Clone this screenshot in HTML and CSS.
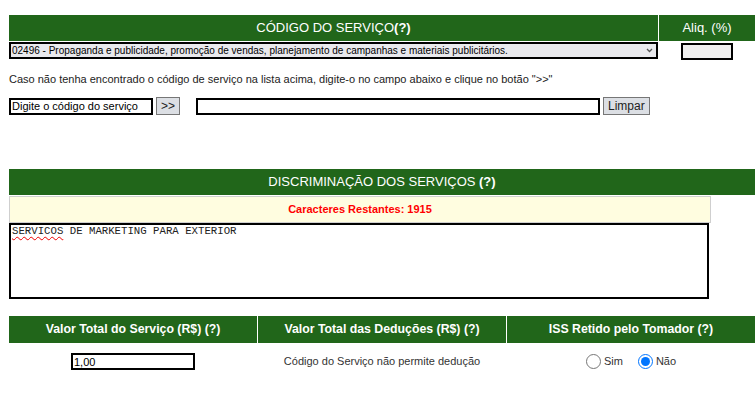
FILE: index.html
```html
<!DOCTYPE html>
<html lang="pt-BR">
<head>
  <meta charset="UTF-8" />
  <title>Serviço</title>
  <link rel="stylesheet" href="styles.css">
</head>
<body>
  <div class="page">
    <div class="codigo">
      <div class="th">CÓDIGO DO SERVIÇO<b>(?)</b></div>
      <div class="th">Aliq. (%)</div>
      <div class="cell selwrap">
        <select class="sel">
          <option>02496 - Propaganda e publicidade, promoção de vendas, planejamento de campanhas e materiais publicitários.</option>
        </select>
        <svg class="seta" width="7" height="5" viewBox="0 0 7 5"><path d="M1 1l2.5 2.5L6 1" fill="none" stroke="#555" stroke-width="1.3"/></svg>
      </div>
      <div class="cell center"><input class="aliq" type="text" disabled></div>
    </div>

    <p class="hint">Caso não tenha encontrado o código de serviço na lista acima, digite-o no campo abaixo e clique no botão "&gt;&gt;"</p>

    <div class="busca">
      <input class="cod" type="text" value="Digite o código do serviço">
      <button class="btn">&gt;&gt;</button>
      <input class="desc" type="text">
      <button class="btn">Limpar</button>
    </div>

    <div class="th wide">DISCRIMINAÇÃO DOS SERVIÇOS <b>(?)</b></div>
    <div class="restantes">Caracteres Restantes: 1915</div>
    <div class="discr"><span class="erro">SERVICOS</span> DE MARKETING PARA EXTERIOR</div>

    <div class="valores">
      <div class="th bold">Valor Total do Serviço (R$) (?)</div>
      <div class="th bold">Valor Total das Deduções (R$) (?)</div>
      <div class="th bold">ISS Retido pelo Tomador (?)</div>
      <div class="cell center"><input class="valor" type="text" value="1,00"></div>
      <div class="cell center small">Código do Serviço não permite dedução</div>
      <div class="cell center small">
        <label class="radio"><input type="radio" name="iss">Sim</label>
        <label class="radio"><input type="radio" name="iss" checked>Não</label>
      </div>
    </div>
  </div>
</body>
</html>
```

FILE: styles.css
```css
body {
  margin: 0;
  font-family: "Liberation Sans", Arial, sans-serif;
  color: #222;
  background: #fff;
}

.page {
  padding: 15px 0 0 9px;
  width: 746px;
}

.th {
  background-color: #21661a;
  color: #fff;
  font-size: 13px;
  text-align: center;
  height: 26px;
  line-height: 26px;
}

.th b {
  font-weight: bold;
}

.th.bold {
  font-weight: bold;
  font-size: 12.3px;
  height: 27px;
  line-height: 27px;
}

.codigo {
  display: grid;
  grid-template-columns: 649px 1fr;
  column-gap: 1px;
  row-gap: 1px;
}

.cell {
  font-size: 11px;
}

.center {
  text-align: center;
}

.selwrap {
  position: relative;
}

.sel {
  display: block;
  width: 649px;
  height: 17px;
  border: 2px solid #000;
  background: #e9e9ed;
  font-family: "Liberation Sans", Arial, sans-serif;
  font-size: 10px;
  padding: 0 0 0 1px;
  color: #000;
  appearance: none;
  -webkit-appearance: none;
  border-radius: 0;
}

.seta {
  position: absolute;
  left: 637px;
  top: 6px;
  pointer-events: none;
}

.aliq {
  width: 52px;
  height: 17px;
  box-sizing: border-box;
  border: 2px solid #000;
  background: #efefef;
  margin-top: 1px;
}

.hint {
  font-size: 11px;
  margin: 13px 0 0 0;
  line-height: 13px;
  color: #222;
}

.busca {
  display: flex;
  align-items: center;
  margin-top: 11px;
  height: 18px;
}

.busca input {
  box-sizing: border-box;
  height: 17px;
  border: 2px solid #000;
  font-family: "Liberation Sans", Arial, sans-serif;
  font-size: 11px;
  padding: 0 1px;
  color: #000;
}

.cod {
  width: 144px;
}

.desc {
  width: 404px;
  margin-left: 16px;
}

.btn {
  box-sizing: border-box;
  height: 18px;
  border: 1px solid #767676;
  background: #dcdfe4;
  font-family: "Liberation Sans", Arial, sans-serif;
  font-size: 12px;
  padding: 0 4px;
  margin-left: 3px;
  color: #222;
}

.wide {
  margin-top: 54px;
}

.restantes {
  width: 702px;
  box-sizing: border-box;
  height: 27px;
  line-height: 25px;
  margin-top: 1px;
  border: 1px solid #cfcfcf;
  background: #fffde0;
  color: #ff0000;
  font-weight: bold;
  font-size: 11px;
  text-align: center;
}

.discr {
  width: 700px;
  height: 76px;
  box-sizing: border-box;
  border: 2px solid #000;
  font-family: "Liberation Mono", "Courier New", monospace;
  font-size: 10.7px;
  padding: 0 1px;
  color: #222;
}

.erro {
  text-decoration: underline wavy #e00;
  text-decoration-thickness: 1px;
  text-underline-offset: 2px;
}

.valores {
  display: grid;
  grid-template-columns: 248px 248px 1fr;
  column-gap: 1px;
  margin-top: 17px;
}

.valores .cell {
  padding-top: 10px;
  height: 17px;
  line-height: 17px;
}

.valor {
  width: 124px;
  height: 17px;
  box-sizing: border-box;
  border: 2px solid #000;
  font-family: "Liberation Sans", Arial, sans-serif;
  font-size: 11px;
  padding: 0 1px;
  color: #000;
  vertical-align: top;
}

.small {
  color: #333;
}

.radio {
  display: inline-flex;
  align-items: center;
  gap: 3px;
  vertical-align: top;
  height: 17px;
}

.radio + .radio {
  margin-left: 12px;
}

.radio input {
  margin: 0;
  width: 15px;
  height: 15px;
}
```
